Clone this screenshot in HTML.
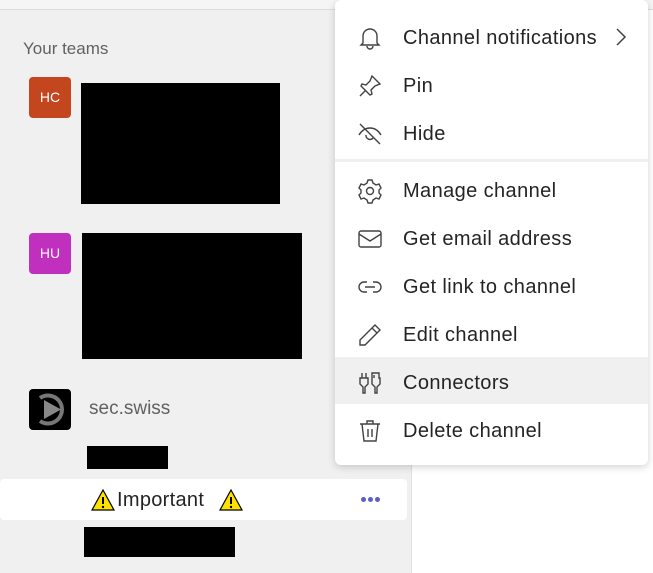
<!DOCTYPE html>
<html><head><meta charset="utf-8"><style>
*{margin:0;padding:0;box-sizing:border-box}
body{width:653px;height:573px;overflow:hidden;background:#fff;font-family:"Liberation Sans",sans-serif;position:relative}
.left{position:absolute;left:0;top:10px;width:412px;height:563px;background:#f0f0f0;border-right:1px solid #e0e0e0}
.topline{position:absolute;left:0;top:0;width:653px;height:10px;background:#f5f5f5;border-bottom:1px solid #dcdcdc}
.abs{position:absolute}
.blk{position:absolute;background:#000}
.av{position:absolute;left:29px;width:42px;height:41px;border-radius:4px;color:#fff;font-size:14px;text-align:center;line-height:41px}
.menu{position:absolute;left:335px;top:0;width:313px;height:465px;background:#fff;border-radius:6px;box-shadow:0 2px 8px rgba(0,0,0,.18)}
.it{position:absolute;left:0;width:313px;height:48px;font-size:20px;color:#242424;letter-spacing:0.4px}
.it span{position:absolute;left:68px;top:14px}
.it svg{position:absolute;left:22px;top:12px}
.dot{position:absolute;top:497px;width:5px;height:5px;border-radius:50%;background:#5b5fc7}
</style></head><body>
<div class="topline"></div>
<div class="left"></div>
<div class="abs" style="left:23px;top:39px;font-size:17px;color:#616161">Your teams</div>
<div class="av" style="top:77px;background:#c4461f">HC</div>
<div class="blk" style="left:81px;top:83px;width:199px;height:121px"></div>
<div class="av" style="top:233px;background:#c12fbe">HU</div>
<div class="blk" style="left:82px;top:233px;width:220px;height:126px"></div>
<div class="av" style="top:389px;background:#000">
<svg width="42" height="41" viewBox="0 0 42 41"><path d="M11 9 A14 14 0 1 1 11 32" fill="none" stroke="#777" stroke-width="4"/><path d="M15 11 L32 20.5 L15 30Z" fill="#888"/></svg></div>
<div class="abs" style="left:89px;top:398px;font-size:19px;color:#616161">sec.swiss</div>
<div class="blk" style="left:87px;top:446px;width:81px;height:23px"></div>
<div class="abs" style="left:0;top:479px;width:407px;height:41px;background:#fff;border-radius:4px"></div>
<svg class="abs" style="left:91px;top:489px" width="24" height="22" viewBox="0 0 24 22"><path d="M12 1L23 21H1z" fill="#ffe100" stroke="#000" stroke-width="1.2"/><path d="M12 8v7" stroke="#000" stroke-width="2"/><circle cx="12" cy="18" r="1.2"/></svg>
<div class="abs" style="left:117px;top:489px;font-size:20px;color:#242424;letter-spacing:0.3px">Important</div>
<svg class="abs" style="left:219px;top:489px" width="24" height="22" viewBox="0 0 24 22"><path d="M12 1L23 21H1z" fill="#ffe100" stroke="#000" stroke-width="1.2"/><path d="M12 8v7" stroke="#000" stroke-width="2"/><circle cx="12" cy="18" r="1.2"/></svg>
<div class="dot" style="left:361px"></div><div class="dot" style="left:368px"></div><div class="dot" style="left:375px"></div>
<div class="blk" style="left:84px;top:527px;width:151px;height:30px"></div>

<div class="menu">
<div class="abs" style="left:0;top:159px;width:313px;height:3px;background:#f0f0f0"></div>
<div class="abs" style="left:0;top:357px;width:313px;height:47px;background:#f0f0f0"></div>
<div class="it" style="top:13px"><svg width="26" height="26" viewBox="0 0 26 26" fill="none" stroke="#424242" stroke-width="1.4"><path d="M6 18V11a7 7 0 0 1 14 0v7l2 2H4z M10 21a3 3 0 0 0 6 0"/></svg><span>Channel notifications</span><svg style="left:280px;top:14px" width="12" height="20" viewBox="0 0 12 20" fill="none" stroke="#424242" stroke-width="1.5"><path d="M2 2l8 8-8 8"/></svg></div>
<div class="it" style="top:61px"><svg width="26" height="26" viewBox="0 0 26 26" fill="none" stroke="#424242" stroke-width="1.4"><path d="M15 3l8 8-5 2-4 4 1 4-2 1-9-9 1-2 4 1 4-4z M9 17l-6 6"/></svg><span>Pin</span></div>
<div class="it" style="top:109px"><svg width="26" height="26" viewBox="0 0 26 26" fill="none" stroke="#424242" stroke-width="1.4"><path d="M3 3l20 20 M2 14c3-5 7-7 11-7s8 2 11 7 M9 14a4 4 0 0 0 7 3"/></svg><span>Hide</span></div>
<div class="it" style="top:166px"><svg width="26" height="26" viewBox="0 0 26 26" fill="none" stroke="#424242" stroke-width="1.4"><path d="M11 2h4l1 3 3 2 3-1 2 4-2 2v3l2 2-2 4-3-1-3 2-1 3h-4l-1-3-3-2-3 1-2-4 2-2v-3l-2-2 2-4 3 1 3-2z"/><circle cx="13" cy="13" r="3.5"/></svg><span>Manage channel</span></div>
<div class="it" style="top:214px"><svg width="26" height="26" viewBox="0 0 26 26" fill="none" stroke="#424242" stroke-width="1.4"><rect x="2" y="5" width="22" height="16" rx="2"/><path d="M2 8l11 7 11-7"/></svg><span>Get email address</span></div>
<div class="it" style="top:262px"><svg width="26" height="26" viewBox="0 0 26 26" fill="none" stroke="#424242" stroke-width="1.4"><path d="M10 8H7a5 5 0 0 0 0 10h3 M16 8h3a5 5 0 0 1 0 10h-3 M8 13h10"/></svg><span>Get link to channel</span></div>
<div class="it" style="top:310px"><svg width="26" height="26" viewBox="0 0 26 26" fill="none" stroke="#424242" stroke-width="1.4"><path d="M18 3l5 5L8 23H3v-5z M15 6l5 5"/></svg><span>Edit channel</span></div>
<div class="it" style="top:358px"><svg width="26" height="26" viewBox="0 0 26 26" fill="none" stroke="#424242" stroke-width="1.4"><path d="M5 3v5 M9 3v5 M3 8h8v6l-3 3v6h-2v-6l-3-3z M15 3h7v5h1v6l-3 3v6h-2v-6l-3-3V8h0z M17 5v3"/></svg><span>Connectors</span></div>
<div class="it" style="top:406px"><svg width="26" height="26" viewBox="0 0 26 26" fill="none" stroke="#424242" stroke-width="1.4"><path d="M3 6h20 M10 6V3h6v3 M5 6l2 17h12l2-17 M11 11v8 M15 11v8"/></svg><span>Delete channel</span></div>
</div>
</body></html>
